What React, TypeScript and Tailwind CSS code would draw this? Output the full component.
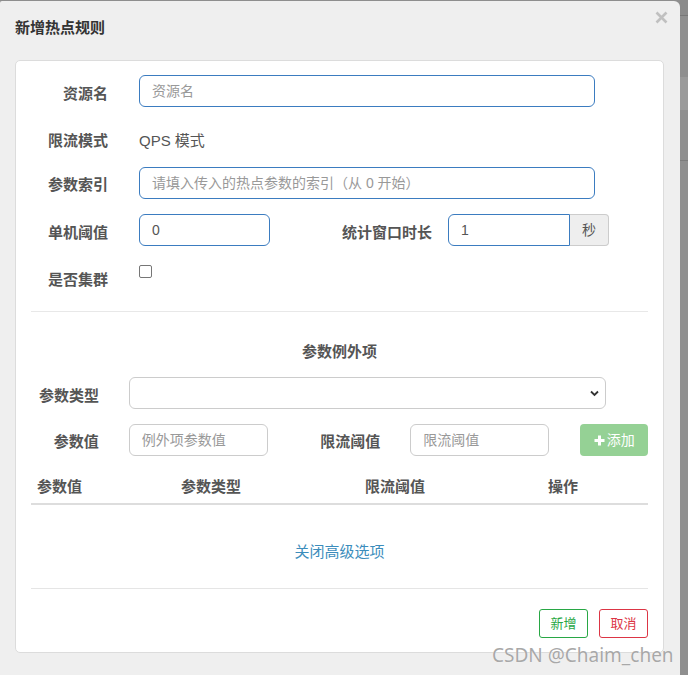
import React from "react";

const labelCls = "text-[15px] font-bold text-[#555] leading-[20px] text-right whitespace-nowrap";
const blueInput =
  "h-[32px] border border-[#3b7cc0] rounded-[6px] px-[12px] text-[14px] text-[#555] placeholder:text-[#999] outline-none bg-white";
const grayInput =
  "h-[32px] border border-[#ccc] rounded-[6px] px-[12px] text-[14px] text-[#555] placeholder:text-[#999] outline-none bg-white";

export default function App() {
  return (
    <div className="flex w-[688px] h-[675px] bg-[#8e8e8e] overflow-hidden font-['Liberation_Sans','Noto_Sans_CJK_SC',sans-serif]">
      <div className="relative w-[680px] mt-[1px] bg-[#efefef] rounded-tr-[6px] rounded-tl-[2px] flex flex-col">
        {/* header */}
        <div className="h-[59px] pl-[15px] pt-[17px]">
          <div className="text-[15px] font-bold text-[#333] leading-[20px]">新增热点规则</div>
        </div>
        <svg className="absolute right-[12px] top-[10px]" width="13" height="13" viewBox="0 0 13 13">
          <path d="M1.5 1.5 L11.5 11.5 M11.5 1.5 L1.5 11.5" stroke="#c0c0c0" strokeWidth="2.6" />
        </svg>

        {/* card */}
        <div className="ml-[15px] mr-[16px] bg-white border border-[#dcdcdc] rounded-[5px] px-[15px] pt-[14px] pb-[14px]">
          {/* row 1 */}
          <div className="flex h-[32px]">
            <div className={`w-[77px] pt-[9px] ${labelCls}`}>资源名</div>
            <input className={`ml-[31px] w-[456px] ${blueInput}`} placeholder="资源名" />
          </div>
          {/* row 2 */}
          <div className="flex h-[30px] mt-[15px]">
            <div className={`w-[77px] pt-[9px] ${labelCls}`}>限流模式</div>
            <div className="ml-[31px] pt-[9px] text-[15px] leading-[20px] text-[#555]">QPS 模式</div>
          </div>
          {/* row 3 */}
          <div className="flex h-[32px] mt-[15px]">
            <div className={`w-[77px] pt-[8px] ${labelCls}`}>参数索引</div>
            <input className={`ml-[31px] w-[456px] ${blueInput}`} placeholder="请填入传入的热点参数的索引（从 0 开始）" />
          </div>
          {/* row 4 */}
          <div className="flex h-[32px] mt-[15px]">
            <div className={`w-[77px] pt-[9px] ${labelCls}`}>单机阈值</div>
            <input className={`ml-[31px] w-[131px] ${blueInput}`} defaultValue="0" />
            <div className={`w-[162px] pt-[9px] ${labelCls}`}>统计窗口时长</div>
            <input
              className="ml-[16px] w-[122px] h-[32px] border border-[#3b7cc0] rounded-l-[6px] px-[12px] text-[14px] text-[#555] outline-none bg-white"
              defaultValue="1"
            />
            <div className="w-[39px] h-[32px] flex items-center justify-center bg-[#eee] border border-l-0 border-[#ccc] rounded-r-[4px] text-[14px] text-[#555]">
              秒
            </div>
          </div>
          {/* row 5 */}
          <div className="flex h-[34px] mt-[15px]">
            <div className={`w-[77px] pt-[9px] ${labelCls}`}>是否集群</div>
            <div className="ml-[31px] mt-[4px] w-[13px] h-[13px] border border-[#767676] rounded-[2px] bg-white" />
          </div>

          <div className="mt-[16px] border-t border-[#e8e8e8]" />

          <div className="mt-[30px] h-[20px] leading-[20px] text-center text-[15px] font-bold text-[#555]">参数例外项</div>

          {/* select row */}
          <div className="flex h-[32px] mt-[15px]">
            <div className={`w-[68px] pt-[9px] ${labelCls}`}>参数类型</div>
            <div className="relative ml-[30px] w-[477px] h-[32px] border border-[#ccc] rounded-[6px] bg-white">
              <svg className="absolute right-[6px] top-[12px]" width="9" height="7" viewBox="0 0 9 7">
                <path d="M1 1.5 L4.5 5 L8 1.5" stroke="#333" strokeWidth="1.8" fill="none" />
              </svg>
            </div>
          </div>

          {/* param value row */}
          <div className="flex h-[32px] mt-[15px]">
            <div className={`w-[68px] pt-[8px] ${labelCls}`}>参数值</div>
            <input className={`ml-[30px] w-[139px] ${grayInput}`} placeholder="例外项参数值" />
            <div className={`w-[113px] pt-[8px] ${labelCls}`}>限流阈值</div>
            <input className={`ml-[30px] w-[139px] ${grayInput}`} placeholder="限流阈值" />
            <div className="ml-[31px] w-[68px] h-[32px] bg-[#95d195] rounded-[4px] flex items-center justify-center text-white text-[14px] font-bold">
              <svg width="11" height="11" viewBox="0 0 11 11" className="mr-[2px]">
                <path d="M5.5 0.5 V10.5 M0.5 5.5 H10.5" stroke="#fff" strokeWidth="3" />
              </svg>
              <span className="font-normal">添加</span>
            </div>
          </div>

          {/* table header */}
          <div className="flex h-[38px] mt-[11px] pt-[3px] items-center border-b-2 border-[#ddd] text-[15px] font-bold text-[#555] leading-[20px]">
            <div className="w-[144px] pl-[6px]">参数值</div>
            <div className="w-[184px] pl-[6px]">参数类型</div>
            <div className="w-[183px] pl-[6px]">限流阈值</div>
            <div className="flex-1 pl-[6px]">操作</div>
          </div>

          <div className="mt-[37px] h-[20px] leading-[20px] text-center text-[15px] text-[#3c8dbc]">关闭高级选项</div>

          <div className="mt-[26px] border-t border-[#e5e5e5]" />

          <div className="mt-[20px] flex justify-end gap-[11px]">
            <div className="w-[49px] h-[29px] border border-[#28a745] rounded-[3px] flex items-center justify-center text-[13px] text-[#28a745]">
              新增
            </div>
            <div className="w-[49px] h-[29px] border border-[#dc3545] rounded-[3px] flex items-center justify-center text-[13px] text-[#dc3545]">
              取消
            </div>
          </div>
        </div>

        <div className="absolute left-[492px] top-[641px] text-[19px] leading-[26px] text-[#a8a8a8] font-['Noto_Sans',sans-serif] [text-shadow:0_0_1px_#fff]">
          CSDN @Chaim_chen
        </div>
      </div>

      {/* right background strip */}
      <div className="w-[8px] flex flex-col">
        <div className="h-[15px] bg-[#8a8a8a]" />
        <div className="h-[1px] bg-[#777]" />
        <div className="h-[61px] bg-[#8f8f8f]" />
        <div className="h-[33px] bg-[#9a9a9a]" />
        <div className="h-[50px] bg-[#8f8f8f]" />
        <div className="h-[1px] bg-[#7c7c7c]" />
        <div className="flex-1 bg-[#8f8f8f]" />
      </div>
    </div>
  );
}
